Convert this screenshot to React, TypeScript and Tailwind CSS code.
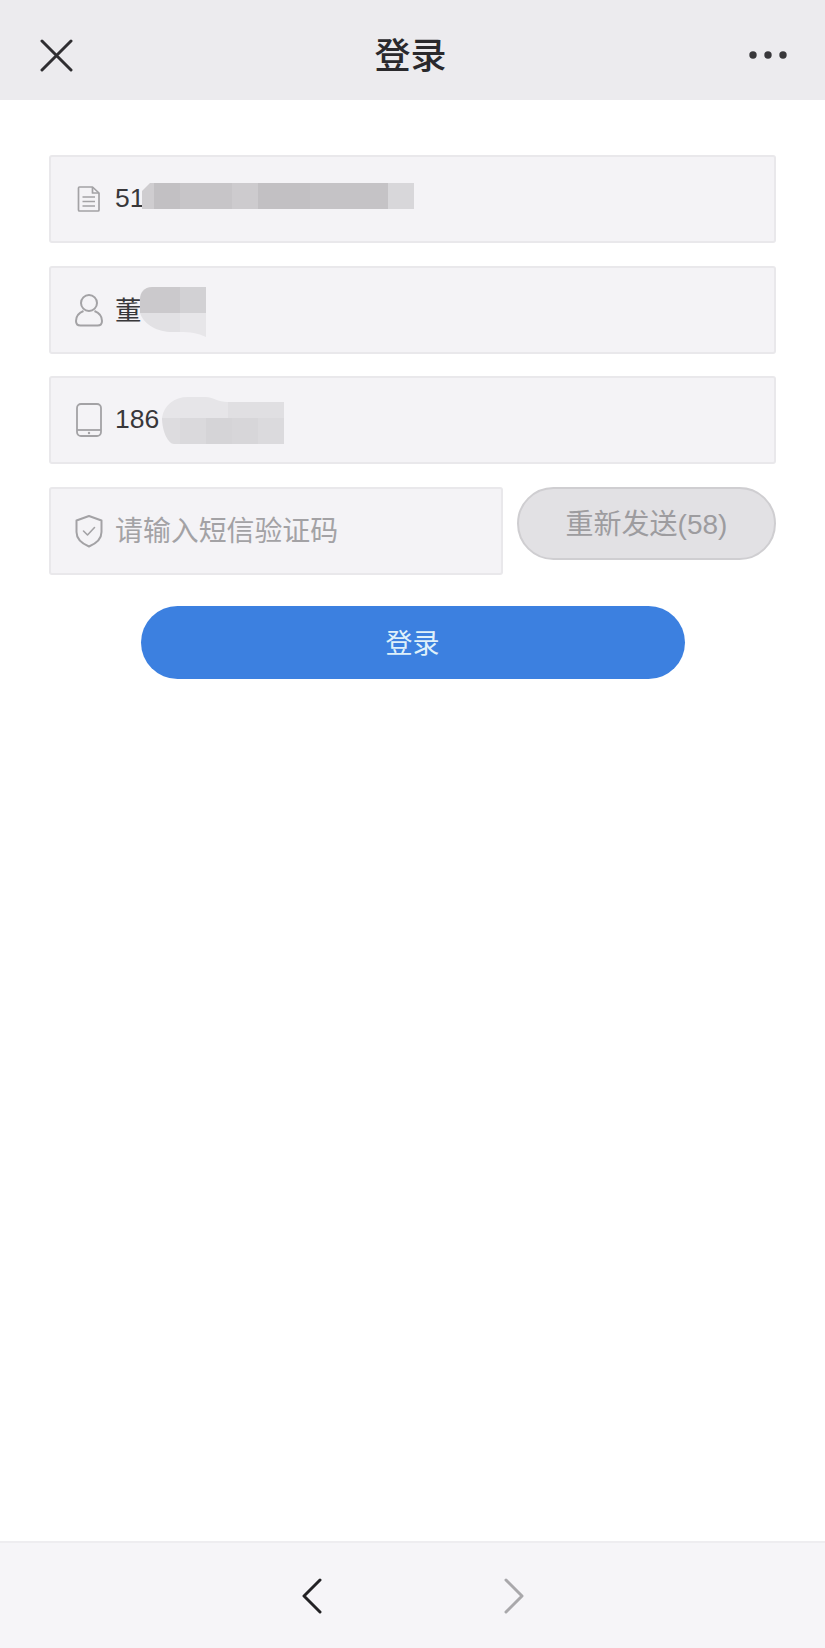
const fontStack = "[font-family:'Liberation_Sans','Noto_Sans_CJK_SC',sans-serif]";

const CloseIcon = () => (
  <svg width="33" height="33" viewBox="0 0 33 33" fill="none" stroke="#2f2e31" strokeWidth="3" strokeLinecap="round">
    <path d="M2 2 L31 31 M31 2 L2 31" />
  </svg>
);

const DotsIcon = () => (
  <svg width="40" height="10" viewBox="0 0 40 10" fill="#38373a">
    <circle cx="5" cy="5" r="3.7" />
    <circle cx="20" cy="5" r="3.7" />
    <circle cx="35" cy="5" r="3.7" />
  </svg>
);

const DocIcon = () => (
  <svg width="30" height="30" viewBox="0 0 30 30" fill="none" stroke="#a3a2a5" strokeWidth="1.7" strokeLinejoin="round">
    <path d="M5.5 3 H18.5 L25 9 V26 a1 1 0 0 1 -1 1 H5.5 a1 1 0 0 1 -1 -1 V4 a1 1 0 0 1 1 -1 Z" />
    <path d="M18.5 3 V9 H25" />
    <path d="M8.5 13 H21 M8.5 17.5 H21 M8.5 22 H21" />
  </svg>
);

const UserIcon = () => (
  <svg width="30" height="34" viewBox="0 0 30 34" fill="none" stroke="#a3a2a5" strokeWidth="2">
    <circle cx="15" cy="10" r="8" />
    <path d="M9.5 18 C4.5 20 2 24 2 28 C2 31 4 32.5 6.5 32.5 H23.5 C26 32.5 28 31 28 28 C28 24 25.5 20 20.5 18" />
  </svg>
);

const PhoneIcon = () => (
  <svg width="30" height="36" viewBox="0 0 30 36" fill="none" stroke="#a3a2a5" strokeWidth="1.8">
    <rect x="3" y="2" width="24" height="32" rx="4" />
    <path d="M3 28 H27" />
    <circle cx="15" cy="31" r="1.2" fill="#a3a2a5" stroke="none" />
  </svg>
);

const ShieldIcon = () => (
  <svg width="30" height="34" viewBox="0 0 30 34" fill="none" stroke="#a3a2a5" strokeWidth="2" strokeLinejoin="round" strokeLinecap="round">
    <path d="M15 2 L27.5 6.5 V18 C27.5 25 21 30 15 32.5 C9 30 2.5 25 2.5 18 V6.5 Z" />
    <path d="M9.5 17 L13.5 21 L20.5 13.5" strokeWidth="1.6" />
  </svg>
);

// mosaics that hide the personal data
const AccountMosaic = () => (
  <svg width="272" height="26" viewBox="0 0 272 26" className="shrink-0">
    <path d="M0 26 V8 L8 0 H14 V26 Z" fill="#cfcdd0" />
    <rect x="12" width="26" height="26" fill="#c2c0c3" />
    <rect x="38" width="52" height="26" fill="#c7c5c8" />
    <rect x="90" width="26" height="26" fill="#cdcbce" />
    <rect x="116" width="52" height="26" fill="#c2c0c3" />
    <rect x="168" width="78" height="26" fill="#c5c3c6" />
    <rect x="246" width="26" height="26" fill="#d8d7da" />
  </svg>
);

const NameMosaic = () => (
  <svg width="66" height="50" viewBox="0 0 66 50" className="shrink-0">
    <path d="M0 26 V12 C0 6 4 0 12 0 H40 V26 Z" fill="#cbc9cc" />
    <rect x="40" width="26" height="26" fill="#d2d1d4" />
    <path d="M0 26 H40 V45 H32 C18 45 4 38 0 26 Z" fill="#e2e1e4" />
    <path d="M40 26 H66 V50 C58 46 50 45 40 45 Z" fill="#e7e6e9" />
  </svg>
);

const PhoneMosaic = () => (
  <svg width="122" height="47" viewBox="0 0 122 47" className="shrink-0">
    <path d="M0 21 C2 8 12 0 26 0 H44 C50 0 56 5 66 5 V21 Z" fill="#e6e5e8" />
    <rect x="66" y="5" width="56" height="16" fill="#e0dfe2" />
    <path d="M0 21 H18 V47 H12 C6 47 0 34 0 21 Z" fill="#dddcdf" />
    <rect x="18" y="21" width="26" height="26" fill="#dad9dc" />
    <rect x="44" y="21" width="26" height="26" fill="#d5d4d7" />
    <rect x="70" y="21" width="26" height="26" fill="#d7d6d9" />
    <rect x="96" y="21" width="26" height="26" fill="#dbdadd" />
  </svg>
);

const InputRow = ({
  icon,
  className,
  children,
}: {
  icon: React.ReactNode;
  className?: string;
  children: React.ReactNode;
}) => (
  <div className={`flex h-[88px] items-center rounded-[3px] border-2 border-[#e9e8eb] bg-[#f4f3f6] pl-[23px] ${className ?? ""}`}>
    <span className="flex w-[30px] shrink-0 justify-center">{icon}</span>
    <div className="ml-[11px] flex items-center text-[26.5px] text-[#38373a]">{children}</div>
  </div>
);

export default function App() {
  return (
    <div className={`flex h-[1648px] w-[825px] flex-col bg-white ${fontStack}`}>
      <header className="flex h-[100px] items-center justify-between bg-[#ecebee] pl-[40px] pr-[37px] pt-[10px]">
        <CloseIcon />
        <h1 className="mt-[4px] text-[36px] font-medium text-[#2a292c]">登录</h1>
        <DotsIcon />
      </header>

      <main className="flex flex-1 flex-col px-[49px] pt-[55px]">
        <div className="flex flex-col gap-[22.5px]">
          <InputRow icon={<DocIcon />}>
            <span>51</span>
            <span className="flex -ml-[2px] -mt-[6px]">
              <AccountMosaic />
            </span>
          </InputRow>
          <InputRow icon={<UserIcon />}>
            <span className="mt-[5px]">董</span>
            <span className="flex -ml-[2px] mt-[5px]">
              <NameMosaic />
            </span>
          </InputRow>
          <InputRow icon={<PhoneIcon />}>
            <span>186</span>
            <span className="flex ml-[3px]">
              <PhoneMosaic />
            </span>
          </InputRow>
          <div className="flex items-start gap-[14px]">
            <InputRow icon={<ShieldIcon />} className="w-[454px] shrink-0">
              <span className="mt-[2px] text-[27.9px] text-[#a3a2a5]">请输入短信验证码</span>
            </InputRow>
            <button className="flex h-[73px] flex-1 items-center justify-center rounded-full border-2 border-[#cfced1] bg-[#e2e1e4] pt-[3px] text-[28px] text-[#9d9c9f]">
              重新发送(58)
            </button>
          </div>
        </div>
        <button className="mx-auto mt-[31px] flex h-[73px] w-[544px] items-center justify-center rounded-full bg-[#3c80e0] pt-[5px] text-[27px] text-[#dff0fa]">
          登录
        </button>
      </main>

      <footer className="flex h-[107px] items-center justify-center gap-[172px] border-t-2 border-[#eeedf0] bg-[#f6f5f8]">
        <svg width="30" height="36" viewBox="0 0 30 36" fill="none" stroke="#232225" strokeWidth="3" strokeLinecap="round" strokeLinejoin="round">
          <path d="M23 2 L7 18 L23 34" />
        </svg>
        <svg width="30" height="36" viewBox="0 0 30 36" fill="none" stroke="#a9a8ab" strokeWidth="3" strokeLinecap="round" strokeLinejoin="round">
          <path d="M7 2 L23 18 L7 34" />
        </svg>
      </footer>
    </div>
  );
}
